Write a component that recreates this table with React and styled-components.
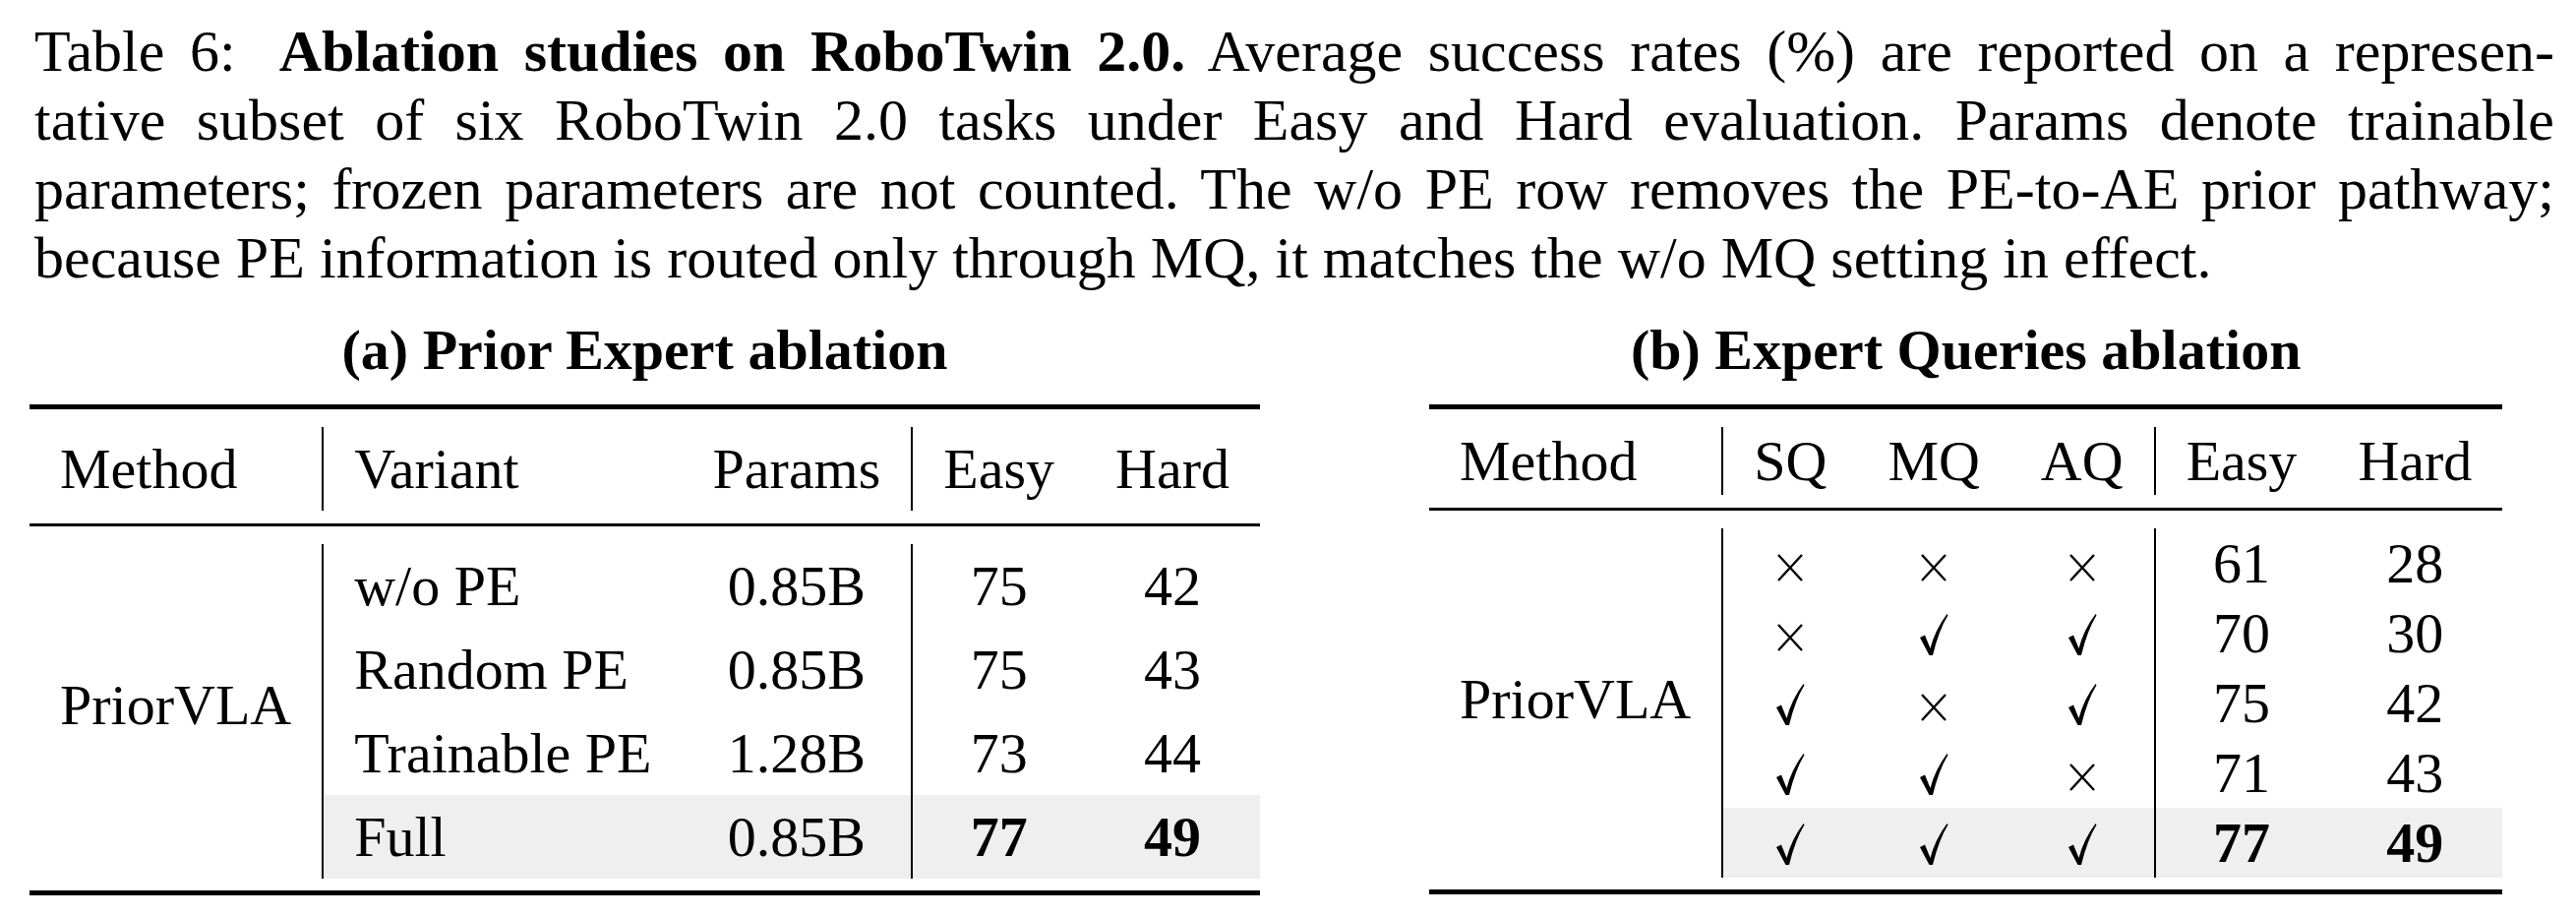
import React from "react";
import styled, { createGlobalStyle } from "styled-components";

const GlobalStyle = createGlobalStyle`
  html, body {
    margin: 0;
    padding: 0;
    background: #fff;
  }
  body {
    font-family: "Liberation Serif", "Times New Roman", serif;
    color: #000;
  }
`;

const Page = styled.div`
  width: 2619px;
  box-sizing: border-box;
  padding: 17px 0 0 30px;
`;

const Caption = styled.div`
  width: 2562px;
  margin-left: 5px;
  font-size: 60px;
  line-height: 70px;
`;

const Line = styled.div`
  white-space: nowrap;
  text-align: ${p => (p.$last ? "left" : "justify")};
  text-align-last: ${p => (p.$last ? "left" : "justify")};
`;

const Label = styled.span`
  margin-right: 44px;
`;

const Lead = styled.b`
  font-weight: 700;
`;

const Tables = styled.div`
  display: flex;
  align-items: flex-start;
  gap: 172px;
  margin-top: 24px;
`;

const Sheet = styled.table`
  border-collapse: separate;
  border-spacing: 0;
  font-size: 58px;
`;

const Title = styled.caption`
  caption-side: top;
  font-weight: 700;
  line-height: 70px;
  padding-bottom: 20px;
  text-align: center;
  white-space: nowrap;
`;

const RuleCell = styled.td`
  height: ${p => p.$w}px;
  padding: 0;
  background: #000;
  font-size: 0;
  line-height: 0;
`;

const GapCell = styled.td`
  height: ${p => p.$h}px;
  padding: 0;
  font-size: 0;
  line-height: 0;
`;

const Cell = styled.td`
  padding: 0 31px;
  height: ${p => p.$h}px;
  line-height: ${p => p.$h}px;
  text-align: ${p => p.$align || "center"};
  border-left: ${p => (p.$bar ? "2px solid #000" : "none")};
  background: ${p => (p.$shade ? "#efefef" : "transparent")};
  font-weight: ${p => (p.$bold ? 700 : 400)};
  white-space: nowrap;
  vertical-align: middle;
`;

const MethodCell = styled.td`
  padding: 0 31px ${p => p.$lift}px;
  text-align: left;
  vertical-align: middle;
  white-space: nowrap;
`;

const Mark = styled.svg`
  width: ${p => p.$w}px;
  height: ${p => p.$h}px;
  vertical-align: ${p => p.$drop}px;
`;

function Check() {
  return (
    <Mark viewBox="0 0 30 44" $w={30} $h={44} $drop={-4}>
      <path d="M1 25 L6 22.5 L11.5 36 Q16.5 17 28.5 1 L29.5 2.2 Q20 18 14 43 L10.5 43 Z" fill="#000" />
    </Mark>
  );
}

function Cross() {
  return (
    <Mark viewBox="0 0 32 32" $w={32} $h={32} $drop={-1}>
      <path d="M4 3 L28 29 M28 3 L4 29" stroke="#000" strokeWidth="2.4" fill="none" />
    </Mark>
  );
}

const mark = v => (v ? <Check /> : <Cross />);

function Rule({ span, w }) {
  return (
    <tr>
      <RuleCell colSpan={span} $w={w} />
    </tr>
  );
}

function Gap({ span, h }) {
  return (
    <tr>
      <GapCell colSpan={span} $h={h} />
    </tr>
  );
}

function AblationTable({ title, columns, rows, headH, rowH, lift }) {
  const span = columns.length + 1;
  return (
    <Sheet>
      <Title>{title}</Title>
      <tbody>
        <Rule span={span} w={5} />
        <Gap span={span} h={18} />
        <tr>
          <Cell $h={headH} $align="left">Method</Cell>
          {columns.map(c => (
            <Cell key={c.label} $h={headH} $align={c.align} $bar={c.bar}>
              {c.label}
            </Cell>
          ))}
        </tr>
        <Gap span={span} h={13} />
        <Rule span={span} w={3} />
        <Gap span={span} h={18} />
        {rows.map((r, i) => (
          <tr key={i}>
            {i === 0 && (
              <MethodCell rowSpan={rows.length} $lift={lift}>
                PriorVLA
              </MethodCell>
            )}
            {r.cells.map((v, j) => (
              <Cell
                key={j}
                $h={rowH}
                $align={columns[j].align}
                $bar={columns[j].bar}
                $shade={r.best}
                $bold={r.best && columns[j].score}
              >
                {columns[j].mark ? mark(v) : v}
              </Cell>
            ))}
          </tr>
        ))}
        <Gap span={span} h={12} />
        <Rule span={span} w={5} />
      </tbody>
    </Sheet>
  );
}

const priorColumns = [
  { label: "Variant", align: "left", bar: true },
  { label: "Params" },
  { label: "Easy", bar: true, score: true },
  { label: "Hard", score: true },
];

const priorRows = [
  { cells: ["w/o PE", "0.85B", "75", "42"] },
  { cells: ["Random PE", "0.85B", "75", "43"] },
  { cells: ["Trainable PE", "1.28B", "73", "44"] },
  { cells: ["Full", "0.85B", "77", "49"], best: true },
];

const queryColumns = [
  { label: "SQ", bar: true, mark: true },
  { label: "MQ", mark: true },
  { label: "AQ", mark: true },
  { label: "Easy", bar: true, score: true },
  { label: "Hard", score: true },
];

const queryRows = [
  { cells: [false, false, false, "61", "28"] },
  { cells: [false, true, true, "70", "30"] },
  { cells: [true, false, true, "75", "42"] },
  { cells: [true, true, false, "71", "43"] },
  { cells: [true, true, true, "77", "49"], best: true },
];

export default function App() {
  return (
    <>
      <GlobalStyle />
      <Page>
        <Caption>
          <Line>
            <Label>Table 6:</Label>
            <Lead>Ablation studies on RoboTwin 2.0.</Lead> Average success rates (%) are reported on a represen-
          </Line>
          <Line>
            tative subset of six RoboTwin 2.0 tasks under Easy and Hard evaluation. Params denote trainable
          </Line>
          <Line>
            parameters; frozen parameters are not counted. The w/o PE row removes the PE-to-AE prior pathway;
          </Line>
          <Line $last>
            because PE information is routed only through MQ, it matches the w/o MQ setting in effect.
          </Line>
        </Caption>
        <Tables>
          <AblationTable
            title="(a) Prior Expert ablation"
            columns={priorColumns}
            rows={priorRows}
            headH={85}
            rowH={85}
            lift={13}
          />
          <AblationTable
            title="(b) Expert Queries ablation"
            columns={queryColumns}
            rows={queryRows}
            headH={69}
            rowH={71}
            lift={8}
          />
        </Tables>
      </Page>
    </>
  );
}
